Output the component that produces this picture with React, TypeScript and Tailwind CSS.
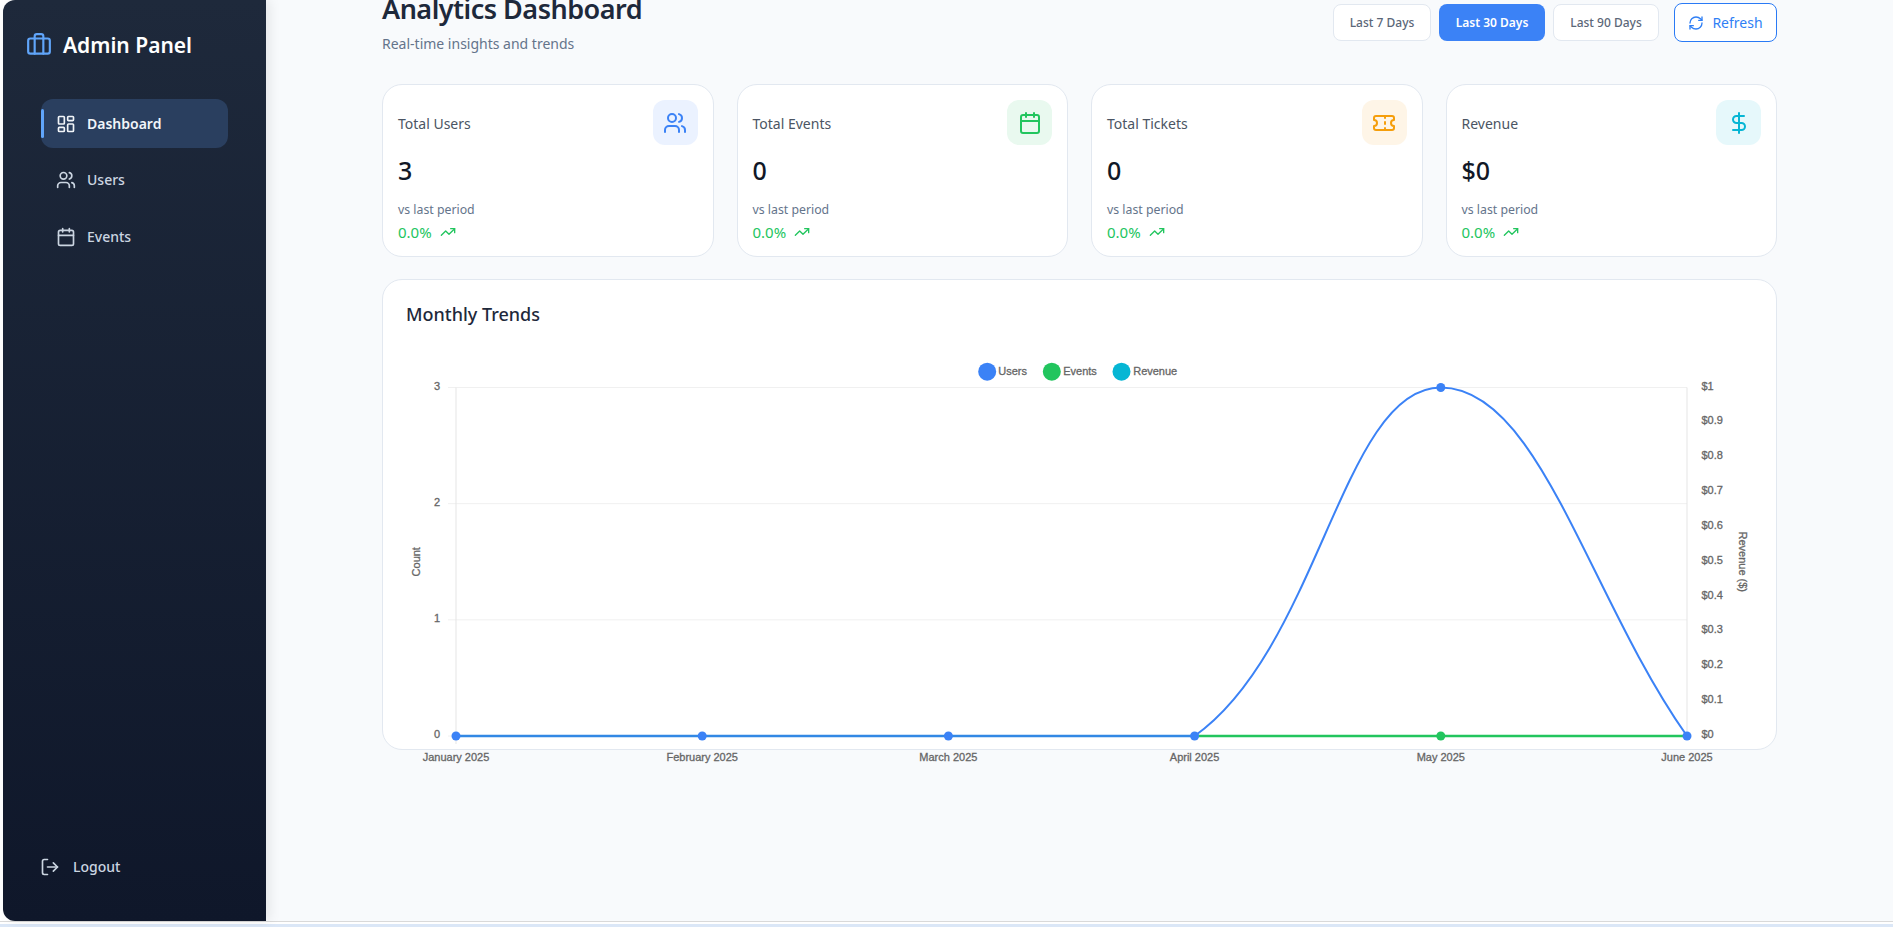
import { Briefcase, Calendar, DollarSign, LayoutDashboard, LogOut, RefreshCw, Ticket, TrendingUp, Users } from "lucide-react"
import type { ComponentType } from "react"

type Stat = {
    label: string
    value: string
    Icon: ComponentType<{ className?: string }>
    box: string
    color: string
}

const stats: Stat[] = [
    { label: "Total Users", value: "3", Icon: Users, box: "bg-[#ebf2ff]", color: "text-[#3b82f6]" },
    { label: "Total Events", value: "0", Icon: Calendar, box: "bg-[#e9f9ef]", color: "text-[#22c55e]" },
    { label: "Total Tickets", value: "0", Icon: Ticket, box: "bg-[#fef5e7]", color: "text-[#f59e0b]" },
    { label: "Revenue", value: "$0", Icon: DollarSign, box: "bg-[#e6f8fb]", color: "text-[#06b6d4]" },
]

const months = ["January 2025", "February 2025", "March 2025", "April 2025", "May 2025", "June 2025"]
const revenueTicks = ["$0", "$0.1", "$0.2", "$0.3", "$0.4", "$0.5", "$0.6", "$0.7", "$0.8", "$0.9", "$1"]

// chart coordinates are relative to the card's top-left corner
const left = 73
const right = 1304
const top = 107.5
const bottom = 456
const step = (right - left) / 5
const xAt = (i: number) => left + step * i

function TrendsChart() {
    const rowH = (bottom - top) / 3
    const revH = (bottom - top) / 10
    const midY = (top + bottom) / 2
    const x3 = xAt(3)
    const x4 = xAt(4)
    const x5 = xAt(5)
    const curve = `M${x3} ${bottom}C${x3 + 124.8} ${bottom - 88.4} ${x4 - 98.4} ${top} ${x4} ${top}C${x4 + 98.4} ${top} ${x5 - 98.4} ${bottom - 139.2} ${x5} ${bottom}`
    const label = { fontSize: 11, fill: "#666", stroke: "#666", strokeWidth: 0.3 }
    return (
        <svg
            className="absolute left-0 top-0 overflow-visible"
            width="1395"
            height="471"
            style={{ fontFamily: '"Liberation Sans", Arial, sans-serif' }}
        >
            {/* grid */}
            {[0, 1, 2, 3].map((i) => (
                <line key={i} x1={left - 8} x2={right} y1={bottom - rowH * i} y2={bottom - rowH * i} stroke="#f0f0f0" />
            ))}
            <line x1={left} x2={left} y1={top} y2={bottom + 8} stroke="#e5e5e5" />
            <line x1={right} x2={right} y1={top} y2={bottom} stroke="#e5e5e5" />

            {/* legend */}
            <circle cx="604.2" cy="91.7" r="9" fill="#3b82f6" />
            <text x="615.2" y="95" {...label}>Users</text>
            <circle cx="668.8" cy="91.7" r="9" fill="#22c55e" />
            <text x="680.2" y="95" {...label}>Events</text>
            <circle cx="738.5" cy="91.7" r="9" fill="#06b6d4" />
            <text x="750.2" y="95" {...label}>Revenue</text>

            {/* y axes */}
            {[0, 1, 2, 3].map((i) => (
                <text key={i} x={left - 16} y={bottom - rowH * i + 2} textAnchor="end" {...label}>{i}</text>
            ))}
            {revenueTicks.map((t, i) => (
                <text key={t} x={right + 14.5} y={bottom - revH * i + 2} {...label}>{t}</text>
            ))}
            <text transform={`translate(37 ${midY}) rotate(-90)`} textAnchor="middle" {...label}>Count</text>
            <text transform={`translate(1355.5 ${midY}) rotate(90)`} textAnchor="middle" {...label}>Revenue ($)</text>

            {/* x axis */}
            {months.map((m, i) => (
                <text key={m} x={xAt(i)} y="481" textAnchor="middle" {...label}>{m}</text>
            ))}

            {/* series */}
            <line x1={x3} x2={right} y1={bottom} y2={bottom} stroke="#22c55e" strokeWidth="2.5" />
            <line x1={left} x2={x3} y1={bottom} y2={bottom} stroke="#3288e4" strokeWidth="2.5" />
            <path d={curve} fill="none" stroke="#3b82f6" strokeWidth="2" />
            {months.map((m, i) => (
                <circle key={m} cx={xAt(i)} cy={bottom} r="4.5" fill={i === 4 ? "#22c55e" : "#3b82f6"} />
            ))}
            <circle cx={x4} cy={top} r="4.5" fill="#3b82f6" />
        </svg>
    )
}

function StatCard({ stat }: { stat: Stat }) {
    const { Icon } = stat
    return (
        <div className="h-[173px] rounded-[20px] border border-[#e2e8f0] bg-white pl-[15px] pr-[15px] pt-[15px]">
            <div className="flex items-center justify-between">
                <span className="mt-[2px] text-sm text-[#4b5563]">{stat.label}</span>
                <div className={`flex h-[45px] w-[45px] items-center justify-center rounded-xl ${stat.box}`}>
                    <Icon className={`h-6 w-6 ${stat.color}`} />
                </div>
            </div>
            <div className="mt-[9px] text-[25px] leading-8 font-medium text-[#111827]">{stat.value}</div>
            <div className="mt-[14px] text-[12.3px] leading-5 text-[#64748b]">vs last period</div>
            <div className="mt-[2px] flex items-center gap-2 text-[15px] leading-5 text-[#22c55e]">
                0.0%
                <TrendingUp className="h-4 w-4" />
            </div>
        </div>
    )
}

export default function App() {
    return (
        <div
            className="flex h-[927px] w-[1893px] flex-col overflow-hidden bg-white"
            style={{ fontFamily: '"Noto Sans", sans-serif' }}
        >
            <div className="flex h-[921px] pl-[3px]">
                {/* Sidebar */}
                <aside className="z-10 flex w-[263px] flex-col rounded-l-xl bg-gradient-to-b from-[#1e293b] to-[#0f172a] shadow-[4px_0_12px_rgba(0,0,0,0.08)]">
                    <div className="flex items-center gap-[11px] pl-[23px] pt-[31px]">
                        <Briefcase className="h-[26px] w-[26px] text-[#60a5fa]" />
                        <span className="text-[21px] leading-7 font-semibold text-white">Admin Panel</span>
                    </div>
                    <nav className="mt-[40px] flex flex-col gap-[7.5px] px-[38px]">
                        <a className="relative flex h-[49px] items-center gap-[11px] rounded-xl bg-[#2a3f5f] pl-[15px] text-sm font-semibold text-[#f1f5f9]">
                            <span className="absolute left-0 top-[10px] h-[29px] w-[3px] rounded-sm bg-[#60a5fa]" />
                            <LayoutDashboard className="h-5 w-5" />
                            Dashboard
                        </a>
                        <a className="flex h-[49px] items-center gap-[11px] pl-[15px] text-sm font-medium text-[#cbd5e1]">
                            <Users className="h-5 w-5" />
                            Users
                        </a>
                        <a className="flex h-[49px] items-center gap-[11px] pl-[15px] text-sm font-medium text-[#cbd5e1]">
                            <Calendar className="h-5 w-5" />
                            Events
                        </a>
                    </nav>
                    <a className="mt-auto mb-[44px] flex items-center gap-[13px] pl-[37px] text-sm font-medium text-[#cbd5e1]">
                        <LogOut className="h-5 w-5" />
                        Logout
                    </a>
                </aside>

                {/* Main */}
                <main className="flex-1 overflow-hidden bg-[#f8fafc] px-[116px]">
                    <div className="-mt-[11px]">
                        <div className="flex items-start justify-between">
                            <div>
                                <h1 className="text-[27px] leading-10 font-semibold tracking-[-0.5px] text-[#1e293b]">Analytics Dashboard</h1>
                                <p className="mt-[5px] text-sm leading-5 text-[#64748b]">Real-time insights and trends</p>
                            </div>
                            <div className="mt-[14px] flex items-center">
                                <div className="flex gap-2">
                                    <button className="h-[37px] w-[98px] rounded-lg border border-[#e2e8f0] bg-white text-xs font-medium text-[#5b6778]">Last 7 Days</button>
                                    <button className="h-[37px] w-[106px] rounded-lg bg-[#3b82f6] text-xs font-semibold text-white">Last 30 Days</button>
                                    <button className="h-[37px] w-[106px] rounded-lg border border-[#e2e8f0] bg-white text-xs font-medium text-[#5b6778]">Last 90 Days</button>
                                </div>
                                <button className="ml-[15px] flex h-[39px] w-[103px] items-center justify-center gap-2 rounded-lg border border-[#2a7af5] bg-white text-sm text-[#2f7ff5]">
                                    <RefreshCw className="h-4 w-4" />
                                    Refresh
                                </button>
                            </div>
                        </div>

                        <div className="mt-[30px] grid grid-cols-4 gap-[23px]">
                            {stats.map((s) => (
                                <StatCard key={s.label} stat={s} />
                            ))}
                        </div>

                        <div className="relative mt-[22px] h-[471px] rounded-[20px] border border-[#e2e8f0] bg-white pl-[23px] pt-[20px]">
                            <h2 className="text-lg leading-7 font-medium text-[#1e293b]">Monthly Trends</h2>
                            <TrendsChart />
                        </div>
                    </div>
                </main>
            </div>
            <div className="h-[3px] border-t border-[#d9d9d9] bg-white" />
            <div className="h-[3px] bg-[#dbe7f7]" />
        </div>
    )
}
